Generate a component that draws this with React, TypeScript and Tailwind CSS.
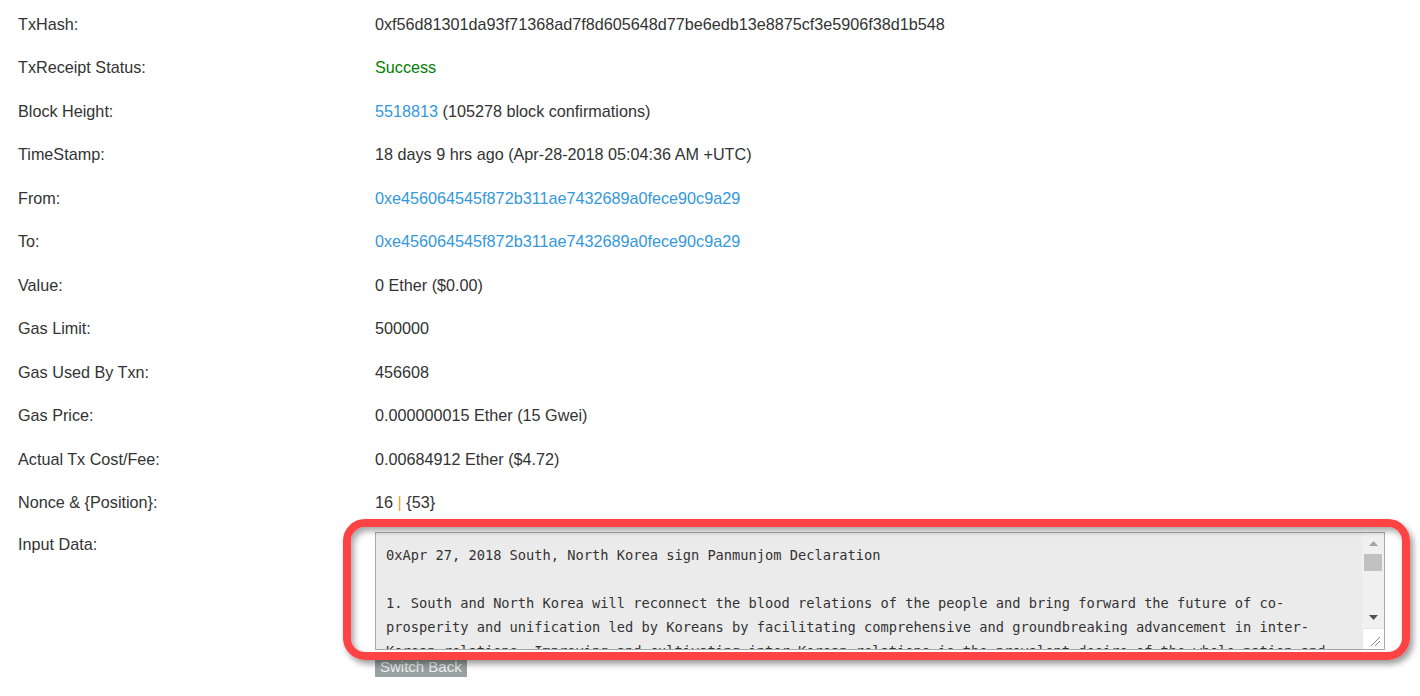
import type { ReactNode } from "react";

type Row = { label: string; value: ReactNode };

const link = "text-[#3498db]";

const rows: Row[] = [
  {
    label: "TxHash:",
    value: "0xf56d81301da93f71368ad7f8d605648d77be6edb13e8875cf3e5906f38d1b548",
  },
  { label: "TxReceipt Status:", value: <span className="text-[#008000]">Success</span> },
  {
    label: "Block Height:",
    value: (
      <>
        <span className={link}>5518813</span> (105278 block confirmations)
      </>
    ),
  },
  { label: "TimeStamp:", value: "18 days 9 hrs ago (Apr-28-2018 05:04:36 AM +UTC)" },
  { label: "From:", value: <span className={link}>0xe456064545f872b311ae7432689a0fece90c9a29</span> },
  { label: "To:", value: <span className={link}>0xe456064545f872b311ae7432689a0fece90c9a29</span> },
  { label: "Value:", value: "0 Ether ($0.00)" },
  { label: "Gas Limit:", value: "500000" },
  { label: "Gas Used By Txn:", value: "456608" },
  { label: "Gas Price:", value: "0.000000015 Ether (15 Gwei)" },
  { label: "Actual Tx Cost/Fee:", value: "0.00684912 Ether ($4.72)" },
  {
    label: "Nonce & {Position}:",
    value: (
      <>
        16 <span className="text-[#e4a336]">|</span> {"{53}"}
      </>
    ),
  },
];

const inputLines = [
  "0xApr 27, 2018 South, North Korea sign Panmunjom Declaration",
  "",
  "1. South and North Korea will reconnect the blood relations of the people and bring forward the future of co-",
  "prosperity and unification led by Koreans by facilitating comprehensive and groundbreaking advancement in inter-",
  "Korean relations. Improving and cultivating inter-Korean relations is the prevalent desire of the whole nation and",
  "the urgent calling of the times that cannot be held back any further.",
];

function ScrollBar() {
  return (
    <div className="w-[22px] flex flex-col bg-[#f0f0f0]">
      <div className="h-[21px] flex items-center justify-center">
        <svg width="9" height="5" viewBox="0 0 9 5">
          <polygon points="4.5,0 9,5 0,5" fill="#a3a3a3" />
        </svg>
      </div>
      <div className="h-[17px] mx-[2px] bg-[#c1c1c1]" />
      <div className="flex-1" />
      <div className="h-[21px] flex items-center justify-center">
        <svg width="9" height="5" viewBox="0 0 9 5">
          <polygon points="0,0 9,0 4.5,5" fill="#505050" />
        </svg>
      </div>
      <div className="h-[21px] bg-white border-l border-t border-[#e6e6e6] flex items-end justify-end pr-[3px] pb-[2px]">
        <svg width="11" height="11" viewBox="0 0 11 11">
          <line x1="1" y1="10" x2="10" y2="1" stroke="#8a8a8a" strokeWidth="1" />
          <line x1="5" y1="10" x2="10" y2="5" stroke="#8a8a8a" strokeWidth="1" />
        </svg>
      </div>
    </div>
  );
}

export default function App() {
  return (
    <div
      className="min-h-[696px] bg-white text-[#333] text-[16.2px] pt-[2px]"
      style={{ fontFamily: '"Liberation Sans", Arial, sans-serif' }}
    >
      {rows.map((r) => (
        <div key={r.label} className="flex h-[43.5px] items-center">
          <div className="w-[375px] pl-[18px] shrink-0">{r.label}</div>
          <div className="whitespace-nowrap">{r.value}</div>
        </div>
      ))}

      <div className="flex items-start">
        <div className="w-[375px] pl-[18px] pt-[10px] leading-[21px] shrink-0">Input Data:</div>
        <div className="pt-[8px]">
          <div className="relative">
            <div className="w-[1010px] h-[118px] flex border border-[#a9a9a9] bg-[#ebebeb] overflow-hidden">
              <div
                className="flex-1 pl-[10px] pt-[10px] text-[13.7px] leading-[24px] text-[#333] whitespace-pre overflow-hidden"
                style={{ fontFamily: '"DejaVu Sans Mono", "Liberation Mono", monospace' }}
              >
                {inputLines.map((l, i) => (
                  <div key={i} className="h-[24px]">
                    {l}
                  </div>
                ))}
              </div>
              <ScrollBar />
            </div>
            <button className="mt-[7px] block bg-[#98a2a2] text-[#eef1f1] px-[5px] h-[20px] leading-[20px] text-[15px]">
              Switch Back
            </button>

            {/* red annotation ring drawn over the input box */}
            <div className="absolute left-[-32px] top-[-13px] w-[1067px] h-[141px] rounded-[22px] border-[8px] border-[#fd4343] shadow-[3px_4px_6px_rgba(0,0,0,0.4),inset_3px_4px_6px_rgba(0,0,0,0.35)] pointer-events-none" />
          </div>
        </div>
      </div>
    </div>
  );
}
